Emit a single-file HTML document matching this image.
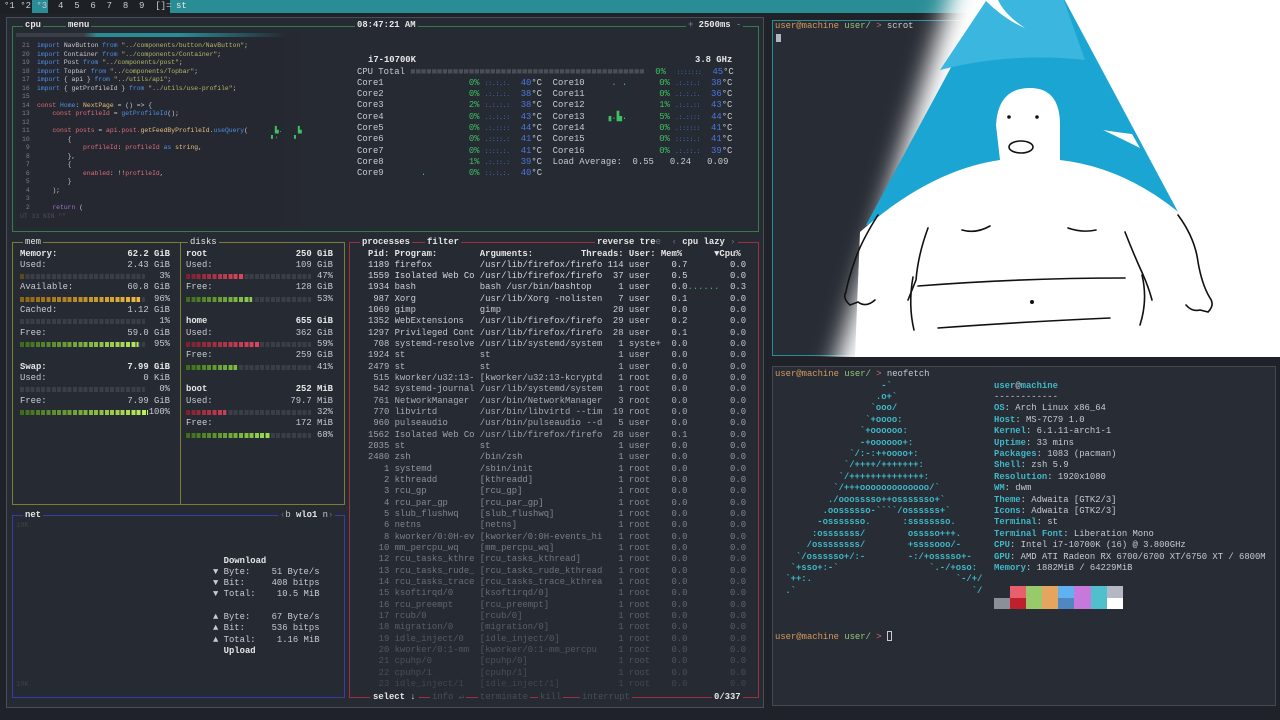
<!DOCTYPE html>
<html><head><meta charset="utf-8">
<style>
*{margin:0;padding:0;box-sizing:border-box}
body{width:1280px;height:720px;overflow:hidden;background:#1f2228;font-family:"Liberation Mono",monospace;font-size:8.9px;color:#c8cad0;position:relative}
.a{position:absolute;white-space:pre}
.nw{white-space:normal}
.box{position:absolute;border:1px solid}
.lh{line-height:11.33px}
.g{color:#3dc060}.bl{color:#4a78e0}.t{color:#4a78e0}.w{color:#e6e6e6;font-weight:bold}
.dim{color:#6a6e76}
.row{height:11.33px;line-height:11.33px;display:flex;justify-content:space-between;white-space:pre}
.bar{height:5px;margin-top:3px}
.pr{white-space:normal}
.pr>div{white-space:pre;height:11.33px;line-height:11.33px;overflow:hidden}
.pr span{display:inline-block;white-space:pre;overflow:hidden;vertical-align:top}
.p{width:4ch;text-align:right}.n{width:15ch;margin-left:1ch}.ar{width:23ch;margin-left:1ch}.th{width:3ch;text-align:right;margin-left:1ch}.u{width:6ch;margin-left:1ch}.m{width:5ch;text-align:right}.c{width:11ch;text-align:right}
.k{color:#3fb8c8;font-weight:bold}
.or{color:#d7995b}.gr{color:#98c379}.rd{color:#e06c75}
.code{font-size:6.4px;line-height:8.5px}
.kw{color:#4d8fe6}.st{color:#b5b868}.cr{color:#e06c75}.ye{color:#e5c07b}
</style></head><body>

<div class="a" style="left:0;top:0;width:1280px;height:13px;background:#1d2024"></div>
<div class="a" style="left:32px;top:0;width:16px;height:13px;background:#2a8d96"></div>
<div class="a" style="left:170px;top:0;width:800px;height:13px;background:#2a8d96"></div>
<div class="a" style="left:4px;top:1px;font-size:9px;color:#c9ccd0">°1 °2 °3  4  5  6  7  8  9  []=</div>
<div class="a" style="left:176px;top:1px;font-size:9px;color:#e6e6e6">st</div>

<div class="box" style="left:6px;top:17px;width:758px;height:691px;border-color:#4a4e56;background:#262a32"></div>

<div class="box" style="left:12px;top:26px;width:747px;height:206px;border-color:#3a7a48"></div>
<div class="a w" style="left:23px;top:20px;background:#262a32;padding:0 2px">cpu</div>
<div class="a w" style="left:66px;top:20px;background:#262a32;padding:0 2px">menu</div>
<div class="a w" style="left:355px;top:20px;background:#262a32;padding:0 2px">08:47:21 AM</div>
<div class="a w" style="left:686px;top:20px;background:#262a32;padding:0 2px"><span class="dim">+</span> 2500ms <span class="dim">-</span></div>

<div class="a" style="left:16px;top:33px;width:300px;height:194px;background:linear-gradient(90deg,#252830 85%,#262a32)"></div>
<div class="a" style="left:16px;top:33px;width:270px;height:4px;background:linear-gradient(90deg,#3a3e46 25%,#2a8d96 30%,#2a8d96 60%,#262a32)"></div>
<div class="a code" style="left:22px;top:42px;color:#7a7e86">21
20
19
18
17
16
15
14
13
12
11
10
 9
 8
 7
 6
 5
 4
 3
 2</div>
<div class="a code" style="left:37px;top:42px;color:#c8cad0"><span class="kw">import</span> NavButton <span class="kw">from</span> <span class="st">"../components/button/NavButton"</span>;
<span class="kw">import</span> Container <span class="kw">from</span> <span class="st">"../components/Container"</span>;
<span class="kw">import</span> Post <span class="kw">from</span> <span class="st">"../components/post"</span>;
<span class="kw">import</span> Topbar <span class="kw">from</span> <span class="st">"../components/Topbar"</span>;
<span class="kw">import</span> { api } <span class="kw">from</span> <span class="st">"../utils/api"</span>;
<span class="kw">import</span> { getProfileId } <span class="kw">from</span> <span class="st">"../utils/use-profile"</span>;

<span class="cr">const</span> <span class="kw">Home</span>: <span class="ye">NextPage</span> = () => {
    <span class="cr">const profileId</span> = <span class="kw">getProfileId</span>();

    <span class="cr">const posts</span> = <span class="cr">api.post.</span><span class="ye">getFeedByProfileId</span>.<span class="kw">useQuery</span>(       <span class="g">▙.    ▙</span>
        {                                                    <span class="g">▘'    ▘</span>
            <span class="cr">profileId</span>: <span class="cr">profileId</span> <span class="kw">as</span> <span class="ye">string</span>,
        },
        {
            <span class="cr">enabled</span>: !!<span class="cr">profileId</span>,
        }
    );

    <span style="color:#a070d0">return</span> (</div>
<div class="a code" style="left:20px;top:213px;color:#4a4e56">UT 33 NIN ""</div>

<div class="a w" style="left:368px;top:55px">i7-10700K</div>
<div class="a w" style="left:695px;top:55px">3.8 GHz</div>
<div class="a lh" style="left:357px;top:66.5px">CPU Total <span style="color:#4a4e56">■■■■■■■■■■■■■■■■■■■■■■■■■■■■■■■■■■■■■■■■■■■■</span>  <span class="g">0%</span>  <span class="bl" style="font-size:6px">:::::::</span>  <span class="t">45</span>°C
Core1                <span class="g">0%</span> <span class="bl" style="font-size:6px">::.:.:.</span>  <span class="t">40</span>°C  Core10     <span class="g">. .</span>      <span class="g">0%</span> <span class="bl" style="font-size:6px">.:.::.:</span>  <span class="t">38</span>°C
Core2                <span class="g">0%</span> <span class="bl" style="font-size:6px">.:.:.:.</span>  <span class="t">38</span>°C  Core11              <span class="g">0%</span> <span class="bl" style="font-size:6px">.:.:.:.</span>  <span class="t">36</span>°C
Core3                <span class="g">2%</span> <span class="bl" style="font-size:6px">:.:.:.:</span>  <span class="t">38</span>°C  Core12              <span class="g">1%</span> <span class="bl" style="font-size:6px">.:.:.::</span>  <span class="t">43</span>°C
Core4                <span class="g">0%</span> <span class="bl" style="font-size:6px">.:.:.::</span>  <span class="t">43</span>°C  Core13    <span class="g">▗.▙.</span>      <span class="g">5%</span> <span class="bl" style="font-size:6px">.:.::::</span>  <span class="t">44</span>°C
Core5                <span class="g">0%</span> <span class="bl" style="font-size:6px">.:.::::</span>  <span class="t">44</span>°C  Core14              <span class="g">0%</span> <span class="bl" style="font-size:6px">.::::::</span>  <span class="t">41</span>°C
Core6                <span class="g">0%</span> <span class="bl" style="font-size:6px">.::::.:</span>  <span class="t">41</span>°C  Core15              <span class="g">0%</span> <span class="bl" style="font-size:6px">:::::.:</span>  <span class="t">41</span>°C
Core7                <span class="g">0%</span> <span class="bl" style="font-size:6px">::::.:.</span>  <span class="t">41</span>°C  Core16              <span class="g">0%</span> <span class="bl" style="font-size:6px">.:.::.:</span>  <span class="t">39</span>°C
Core8                <span class="g">1%</span> <span class="bl" style="font-size:6px">.:.::.:</span>  <span class="t">39</span>°C  Load Average:  0.55   0.24   0.09
Core9       <span class="g">.</span>        <span class="g">0%</span> <span class="bl" style="font-size:6px">::.:.:.</span>  <span class="t">40</span>°C</div>

<div class="box" style="left:12px;top:242px;width:333px;height:263px;border-color:#7c7c34"></div>
<div class="a" style="left:180px;top:242px;width:1px;height:263px;background:#7c7c34"></div>
<div class="a w" style="left:23px;top:237px;background:#262a32;padding:0 2px;font-weight:normal">mem</div>
<div class="a w" style="left:188px;top:237px;background:#262a32;padding:0 2px;font-weight:normal">disks</div>

<div class="a nw" style="left:20px;top:248.5px;width:150px"><div class="row"><span class="w">Memory:</span><span class="w">62.2 GiB</span></div><div class="row"><span>Used:</span><span>2.43 GiB</span></div><div class="row"><div class="bar" style="width:125px;background:repeating-linear-gradient(90deg,transparent 0 4px,#262a32 4px 5.3px),linear-gradient(90deg,#5a4a1a 0 3%,#3b3e45 3%)"></div><span>3%</span></div><div class="row"><span>Available:</span><span>60.8 GiB</span></div><div class="row"><div class="bar" style="width:125px;background:repeating-linear-gradient(90deg,transparent 0 4px,#262a32 4px 5.3px),linear-gradient(90deg,#8a6510,#f0b840 96%,#3b3e45 96%)"></div><span>96%</span></div><div class="row"><span>Cached:</span><span>1.12 GiB</span></div><div class="row"><div class="bar" style="width:125px;background:repeating-linear-gradient(90deg,transparent 0 4px,#262a32 4px 5.3px),linear-gradient(90deg,#3b3e45,#3b3e45)"></div><span>1%</span></div><div class="row"><span>Free:</span><span>59.0 GiB</span></div><div class="row"><div class="bar" style="width:125px;background:repeating-linear-gradient(90deg,transparent 0 4px,#262a32 4px 5.3px),linear-gradient(90deg,#3d6a1c,#b8e860 95%,#3b3e45 95%)"></div><span>95%</span></div><div class="row"></div><div class="row"><span class="w">Swap:</span><span class="w">7.99 GiB</span></div><div class="row"><span>Used:</span><span>0 KiB</span></div><div class="row"><div class="bar" style="width:125px;background:repeating-linear-gradient(90deg,transparent 0 4px,#262a32 4px 5.3px),linear-gradient(90deg,#3b3e45,#3b3e45)"></div><span>0%</span></div><div class="row"><span>Free:</span><span>7.99 GiB</span></div><div class="row"><div class="bar" style="width:128px;background:repeating-linear-gradient(90deg,transparent 0 4px,#262a32 4px 5.3px),linear-gradient(90deg,#3d6a1c,#c0f060)"></div><span>100%</span></div></div>

<div class="a nw" style="left:186px;top:248.5px;width:147px"><div class="row"><span class="w">root</span><span class="w">250 GiB</span></div><div class="row"><span>Used:</span><span>109 GiB</span></div><div class="row"><div class="bar" style="width:125px;background:repeating-linear-gradient(90deg,transparent 0 4px,#262a32 4px 5.3px),linear-gradient(90deg,#7a2030,#e04860 47%,#3b3e45 47%)"></div><span>47%</span></div><div class="row"><span>Free:</span><span>128 GiB</span></div><div class="row"><div class="bar" style="width:125px;background:repeating-linear-gradient(90deg,transparent 0 4px,#262a32 4px 5.3px),linear-gradient(90deg,#3d6a1c,#90d050 53%,#3b3e45 53%)"></div><span>53%</span></div><div class="row"></div><div class="row"><span class="w">home</span><span class="w">655 GiB</span></div><div class="row"><span>Used:</span><span>362 GiB</span></div><div class="row"><div class="bar" style="width:125px;background:repeating-linear-gradient(90deg,transparent 0 4px,#262a32 4px 5.3px),linear-gradient(90deg,#7a2030,#e04860 59%,#3b3e45 59%)"></div><span>59%</span></div><div class="row"><span>Free:</span><span>259 GiB</span></div><div class="row"><div class="bar" style="width:125px;background:repeating-linear-gradient(90deg,transparent 0 4px,#262a32 4px 5.3px),linear-gradient(90deg,#3d6a1c,#80c040 41%,#3b3e45 41%)"></div><span>41%</span></div><div class="row"></div><div class="row"><span class="w">boot</span><span class="w">252 MiB</span></div><div class="row"><span>Used:</span><span>79.7 MiB</span></div><div class="row"><div class="bar" style="width:125px;background:repeating-linear-gradient(90deg,transparent 0 4px,#262a32 4px 5.3px),linear-gradient(90deg,#7a2030,#d04058 32%,#3b3e45 32%)"></div><span>32%</span></div><div class="row"><span>Free:</span><span>172 MiB</span></div><div class="row"><div class="bar" style="width:125px;background:repeating-linear-gradient(90deg,transparent 0 4px,#262a32 4px 5.3px),linear-gradient(90deg,#3d6a1c,#a0e050 68%,#3b3e45 68%)"></div><span>68%</span></div></div>

<div class="box" style="left:12px;top:515px;width:333px;height:183px;border-color:#3a3aa8"></div>
<div class="a w" style="left:23px;top:510px;background:#262a32;padding:0 2px">net</div>
<div class="a" style="left:278px;top:510px;background:#262a32;padding:0 2px"><span class="dim">‹</span>b <b class="w">wlo1</b> n<span class="dim">›</span></div>
<div class="a" style="left:16px;top:522px;color:#3e424a;font-size:7px">10K</div>
<div class="a" style="left:16px;top:681px;color:#3e424a;font-size:7px">10K</div>
<div class="a lh" style="left:213px;top:555.5px">  <b class="w">Download</b>
▼ Byte:    51 Byte/s
▼ Bit:     408 bitps
▼ Total:    10.5 MiB

▲ Byte:    67 Byte/s
▲ Bit:     536 bitps
▲ Total:    1.16 MiB
  <b class="w">Upload</b></div>

<div class="box" style="left:349px;top:242px;width:410px;height:456px;border-color:#a03040"></div>
<div class="a" style="left:360px;top:237px;background:#262a32;padding:0 2px"><b class="w">processes</b></div>
<div class="a" style="left:425px;top:237px;background:#262a32;padding:0 2px"><b class="w">filter</b></div>
<div class="a" style="left:595px;top:237px;background:#262a32;padding:0 2px"><b class="w">reverse</b> <b class="w">tre</b><span class="dim">e</span>  <span class="dim">‹</span> <b class="w">cpu lazy</b> <span class="dim">›</span></div>
<div class="a pr" style="left:368px;top:248.5px;height:443px;overflow:hidden"><div class="w"><span class="p">Pid:</span><span class="n">Program:</span><span class="ar">Arguments:</span><span style="width:14ch;margin-left:-4ch;text-align:left">Threads: User:</span><span style="width:5ch;text-align:right">Mem%</span><span class="c">▼Cpu%</span></div><div style="color:#d6d8dc"><span class="p">1189</span><span class="n">firefox</span><span class="ar">/usr/lib/firefox/firefo</span><span class="th">114</span><span class="u">user</span><span class="m">0.7</span><span class="c">0.0</span></div><div style="color:#d6d8dc"><span class="p">1559</span><span class="n">Isolated Web Co</span><span class="ar">/usr/lib/firefox/firefo</span><span class="th">37</span><span class="u">user</span><span class="m">0.5</span><span class="c">0.0</span></div><div style="color:#d0d2d6"><span class="p">1934</span><span class="n">bash</span><span class="ar">bash /usr/bin/bashtop</span><span class="th">1</span><span class="u">user</span><span class="m">0.0</span><span class="c"><span class="g">......</span>  0.3</span></div><div style="color:#d0d2d6"><span class="p">987</span><span class="n">Xorg</span><span class="ar">/usr/lib/Xorg -nolisten</span><span class="th">7</span><span class="u">user</span><span class="m">0.1</span><span class="c">0.0</span></div><div style="color:#cccdd2"><span class="p">1069</span><span class="n">gimp</span><span class="ar">gimp</span><span class="th">20</span><span class="u">user</span><span class="m">0.0</span><span class="c">0.0</span></div><div style="color:#c8cacf"><span class="p">1352</span><span class="n">WebExtensions</span><span class="ar">/usr/lib/firefox/firefo</span><span class="th">29</span><span class="u">user</span><span class="m">0.2</span><span class="c">0.0</span></div><div style="color:#c4c6cb"><span class="p">1297</span><span class="n">Privileged Cont</span><span class="ar">/usr/lib/firefox/firefo</span><span class="th">28</span><span class="u">user</span><span class="m">0.1</span><span class="c">0.0</span></div><div style="color:#c0c2c7"><span class="p">708</span><span class="n">systemd-resolve</span><span class="ar">/usr/lib/systemd/system</span><span class="th">1</span><span class="u">syste+</span><span class="m">0.0</span><span class="c">0.0</span></div><div style="color:#bcbec3"><span class="p">1924</span><span class="n">st</span><span class="ar">st</span><span class="th">1</span><span class="u">user</span><span class="m">0.0</span><span class="c">0.0</span></div><div style="color:#b8bac0"><span class="p">2479</span><span class="n">st</span><span class="ar">st</span><span class="th">1</span><span class="u">user</span><span class="m">0.0</span><span class="c">0.0</span></div><div style="color:#b4b6bc"><span class="p">515</span><span class="n">kworker/u32:13-</span><span class="ar">[kworker/u32:13-kcryptd</span><span class="th">1</span><span class="u">root</span><span class="m">0.0</span><span class="c">0.0</span></div><div style="color:#b0b2b8"><span class="p">542</span><span class="n">systemd-journal</span><span class="ar">/usr/lib/systemd/system</span><span class="th">1</span><span class="u">root</span><span class="m">0.0</span><span class="c">0.0</span></div><div style="color:#acaeb4"><span class="p">761</span><span class="n">NetworkManager</span><span class="ar">/usr/bin/NetworkManager</span><span class="th">3</span><span class="u">root</span><span class="m">0.0</span><span class="c">0.0</span></div><div style="color:#a8aab0"><span class="p">770</span><span class="n">libvirtd</span><span class="ar">/usr/bin/libvirtd --tim</span><span class="th">19</span><span class="u">root</span><span class="m">0.0</span><span class="c">0.0</span></div><div style="color:#a4a6ac"><span class="p">960</span><span class="n">pulseaudio</span><span class="ar">/usr/bin/pulseaudio --d</span><span class="th">5</span><span class="u">user</span><span class="m">0.0</span><span class="c">0.0</span></div><div style="color:#a0a2a8"><span class="p">1562</span><span class="n">Isolated Web Co</span><span class="ar">/usr/lib/firefox/firefo</span><span class="th">28</span><span class="u">user</span><span class="m">0.1</span><span class="c">0.0</span></div><div style="color:#9c9ea4"><span class="p">2035</span><span class="n">st</span><span class="ar">st</span><span class="th">1</span><span class="u">user</span><span class="m">0.0</span><span class="c">0.0</span></div><div style="color:#989aa0"><span class="p">2480</span><span class="n">zsh</span><span class="ar">/bin/zsh</span><span class="th">1</span><span class="u">user</span><span class="m">0.0</span><span class="c">0.0</span></div><div style="color:#94969c"><span class="p">1</span><span class="n">systemd</span><span class="ar">/sbin/init</span><span class="th">1</span><span class="u">root</span><span class="m">0.0</span><span class="c">0.0</span></div><div style="color:#909298"><span class="p">2</span><span class="n">kthreadd</span><span class="ar">[kthreadd]</span><span class="th">1</span><span class="u">root</span><span class="m">0.0</span><span class="c">0.0</span></div><div style="color:#8c8e94"><span class="p">3</span><span class="n">rcu_gp</span><span class="ar">[rcu_gp]</span><span class="th">1</span><span class="u">root</span><span class="m">0.0</span><span class="c">0.0</span></div><div style="color:#888a90"><span class="p">4</span><span class="n">rcu_par_gp</span><span class="ar">[rcu_par_gp]</span><span class="th">1</span><span class="u">root</span><span class="m">0.0</span><span class="c">0.0</span></div><div style="color:#84868c"><span class="p">5</span><span class="n">slub_flushwq</span><span class="ar">[slub_flushwq]</span><span class="th">1</span><span class="u">root</span><span class="m">0.0</span><span class="c">0.0</span></div><div style="color:#808288"><span class="p">6</span><span class="n">netns</span><span class="ar">[netns]</span><span class="th">1</span><span class="u">root</span><span class="m">0.0</span><span class="c">0.0</span></div><div style="color:#7c7e84"><span class="p">8</span><span class="n">kworker/0:0H-ev</span><span class="ar">[kworker/0:0H-events_hi</span><span class="th">1</span><span class="u">root</span><span class="m">0.0</span><span class="c">0.0</span></div><div style="color:#787a80"><span class="p">10</span><span class="n">mm_percpu_wq</span><span class="ar">[mm_percpu_wq]</span><span class="th">1</span><span class="u">root</span><span class="m">0.0</span><span class="c">0.0</span></div><div style="color:#74767c"><span class="p">12</span><span class="n">rcu_tasks_kthre</span><span class="ar">[rcu_tasks_kthread]</span><span class="th">1</span><span class="u">root</span><span class="m">0.0</span><span class="c">0.0</span></div><div style="color:#707278"><span class="p">13</span><span class="n">rcu_tasks_rude_</span><span class="ar">[rcu_tasks_rude_kthread</span><span class="th">1</span><span class="u">root</span><span class="m">0.0</span><span class="c">0.0</span></div><div style="color:#6c6e74"><span class="p">14</span><span class="n">rcu_tasks_trace</span><span class="ar">[rcu_tasks_trace_kthrea</span><span class="th">1</span><span class="u">root</span><span class="m">0.0</span><span class="c">0.0</span></div><div style="color:#686a70"><span class="p">15</span><span class="n">ksoftirqd/0</span><span class="ar">[ksoftirqd/0]</span><span class="th">1</span><span class="u">root</span><span class="m">0.0</span><span class="c">0.0</span></div><div style="color:#64666c"><span class="p">16</span><span class="n">rcu_preempt</span><span class="ar">[rcu_preempt]</span><span class="th">1</span><span class="u">root</span><span class="m">0.0</span><span class="c">0.0</span></div><div style="color:#606268"><span class="p">17</span><span class="n">rcub/0</span><span class="ar">[rcub/0]</span><span class="th">1</span><span class="u">root</span><span class="m">0.0</span><span class="c">0.0</span></div><div style="color:#5c5e64"><span class="p">18</span><span class="n">migration/0</span><span class="ar">[migration/0]</span><span class="th">1</span><span class="u">root</span><span class="m">0.0</span><span class="c">0.0</span></div><div style="color:#585a60"><span class="p">19</span><span class="n">idle_inject/0</span><span class="ar">[idle_inject/0]</span><span class="th">1</span><span class="u">root</span><span class="m">0.0</span><span class="c">0.0</span></div><div style="color:#54565c"><span class="p">20</span><span class="n">kworker/0:1-mm</span><span class="ar">[kworker/0:1-mm_percpu</span><span class="th">1</span><span class="u">root</span><span class="m">0.0</span><span class="c">0.0</span></div><div style="color:#505258"><span class="p">21</span><span class="n">cpuhp/0</span><span class="ar">[cpuhp/0]</span><span class="th">1</span><span class="u">root</span><span class="m">0.0</span><span class="c">0.0</span></div><div style="color:#4c4e54"><span class="p">22</span><span class="n">cpuhp/1</span><span class="ar">[cpuhp/1]</span><span class="th">1</span><span class="u">root</span><span class="m">0.0</span><span class="c">0.0</span></div><div style="color:#44464c"><span class="p">23</span><span class="n">idle_inject/1</span><span class="ar">[idle_inject/1]</span><span class="th">1</span><span class="u">root</span><span class="m">0.0</span><span class="c">0.0</span></div></div>
<div class="a" style="left:370px;top:692px;background:#262a32;padding:0 3px"><b class="w">select</b> ↓</div>
<div class="a" style="left:430px;top:692px;background:#262a32;padding:0 2px;color:#4a4e56">info ↵</div>
<div class="a" style="left:478px;top:692px;background:#262a32;padding:0 2px;color:#4a4e56">terminate</div>
<div class="a" style="left:538px;top:692px;background:#262a32;padding:0 2px;color:#4a4e56">kill</div>
<div class="a" style="left:580px;top:692px;background:#262a32;padding:0 2px;color:#4a4e56">interrupt</div>
<div class="a" style="left:712px;top:692px;background:#262a32;padding:0 2px"><b class="w">0/337</b></div>

<div class="box" style="left:772px;top:20px;width:508px;height:336px;border-color:#2a8d96;background:#282c34"></div>
<div class="a" style="left:775px;top:21px"><span class="or">user@machine</span> <span class="gr">user/</span> <span class="rd">&gt;</span> scrot</div>
<div class="a" style="left:776px;top:34px;width:5px;height:8px;background:#b0b6c4"></div>

<svg class="a" style="left:0;top:0" width="1280" height="357" viewBox="0 0 1280 357">
<defs><filter id="bl" x="-20%" y="-20%" width="140%" height="140%"><feGaussianBlur stdDeviation="12"/></filter></defs>
<polygon points="968,-60 1340,-60 1340,420 818,420" fill="#ffffff" filter="url(#bl)"/>
<polygon points="985,0 1300,0 1300,357 860,357 880,230" fill="#ffffff"/>
<polygon points="990,-5 1062,-5 1185,225 866,225" fill="#1aa5d3"/>
<path d="M940,70 Q1010,52 1085,60 L1062,-5 L990,-5 Z" fill="#3ab6df"/>
<path d="M985,0 Q1005,20 1025,28 Q1005,15 998,0 Z" fill="#fff"/>
<path d="M1103,130 Q1120,138 1140,148 L1132,134 Q1115,132 1103,130Z" fill="#fff"/>
<path d="M860,232 Q930,170 1000,160 L996,125 Q998,88 1030,88 Q1060,88 1060,125 L1060,160 Q1130,168 1190,222 L1200,357 L855,357 Z" fill="#fff"/>
<g fill="none" stroke="#111" stroke-width="1.6" stroke-linecap="round">
<path d="M878,215 Q862,240 855,260 Q848,280 846,292 Q842,298 850,305 L858,302 Q866,308 875,300"/>
<path d="M928,228 Q918,255 916,280 Q912,290 908,300"/>
<path d="M913,277 Q908,305 914,330"/>
<path d="M1178,215 Q1195,238 1198,262 Q1202,285 1210,298 Q1215,305 1208,312 L1200,310 Q1192,312 1186,305"/>
<path d="M1125,232 Q1132,250 1140,268 Q1148,285 1152,300"/>
<path d="M1142,275 Q1148,300 1140,325"/>
<path d="M962,230 Q976,234 990,226"/>
<path d="M1068,228 Q1082,233 1096,230"/>
<path d="M918,286 Q1020,278 1125,278"/>
<path d="M938,328 Q1020,322 1110,318"/>
<ellipse cx="1021" cy="147" rx="12" ry="6"/>
</g>
<circle cx="1009" cy="117" r="1.8" fill="#111"/><circle cx="1037" cy="117" r="1.8" fill="#111"/><circle cx="1032" cy="302" r="2" fill="#111"/>
</svg>

<div class="box" style="left:772px;top:366px;width:504px;height:340px;border-color:#464a52;background:#282c34"></div>
<div class="a" style="left:775px;top:369px"><span class="or">user@machine</span> <span class="gr">user/</span> <span class="rd">&gt;</span> neofetch</div>
<div class="a" style="left:780px;top:380.5px;line-height:11.4px;color:#3fb8c8;font-weight:bold">                   -&#96;
                  .o+&#96;
                 &#96;ooo/
                &#96;+oooo:
               &#96;+oooooo:
               -+oooooo+:
             &#96;/:-:++oooo+:
            &#96;/++++/+++++++:
           &#96;/++++++++++++++:
          &#96;/+++ooooooooooooo/&#96;
         ./ooosssso++osssssso+&#96;
        .oossssso-&#96;&#96;&#96;&#96;/ossssss+&#96;
       -osssssso.      :ssssssso.
      :osssssss/        osssso+++.
     /ossssssss/        +ssssooo/-
   &#96;/ossssso+/:-        -:/+osssso+-
  &#96;+sso+:-&#96;                 &#96;.-/+oso:
 &#96;++:.                           &#96;-/+/
 .&#96;                                 &#96;/</div>
<div class="a" style="left:994px;top:380.5px;line-height:11.4px"><span class="k">user</span><span>@</span><span class="k">machine</span>
------------
<span class="k">OS</span>: Arch Linux x86_64
<span class="k">Host</span>: MS-7C79 1.0
<span class="k">Kernel</span>: 6.1.11-arch1-1
<span class="k">Uptime</span>: 33 mins
<span class="k">Packages</span>: 1083 (pacman)
<span class="k">Shell</span>: zsh 5.9
<span class="k">Resolution</span>: 1920x1080
<span class="k">WM</span>: dwm
<span class="k">Theme</span>: Adwaita [GTK2/3]
<span class="k">Icons</span>: Adwaita [GTK2/3]
<span class="k">Terminal</span>: st
<span class="k">Terminal Font</span>: Liberation Mono
<span class="k">CPU</span>: Intel i7-10700K (16) @ 3.800GHz
<span class="k">GPU</span>: AMD ATI Radeon RX 6700/6700 XT/6750 XT / 6800M
<span class="k">Memory</span>: 1882MiB / 64229MiB</div>
<div class="a nw" style="left:994px;top:586px;display:grid;grid-template-columns:repeat(8,16.1px);grid-template-rows:11.5px 11.5px"><i style="background:#282c34"></i><i style="background:#e8606e"></i><i style="background:#98c96a"></i><i style="background:#e5a55e"></i><i style="background:#61b0f0"></i><i style="background:#c678dd"></i><i style="background:#4fc0cc"></i><i style="background:#b4b8c2"></i><i style="background:#8b8f97"></i><i style="background:#c0202c"></i><i style="background:#98c96a"></i><i style="background:#e5a55e"></i><i style="background:#4f88c0"></i><i style="background:#c678dd"></i><i style="background:#4fc0cc"></i><i style="background:#ffffff"></i></div>
<div class="a" style="left:775px;top:631px"><span class="or">user@machine</span> <span class="gr">user/</span> <span class="rd">&gt;</span> <span style="display:inline-block;width:5px;height:10px;border:1px solid #c8cad0;vertical-align:-2px"></span></div>
</body></html>
